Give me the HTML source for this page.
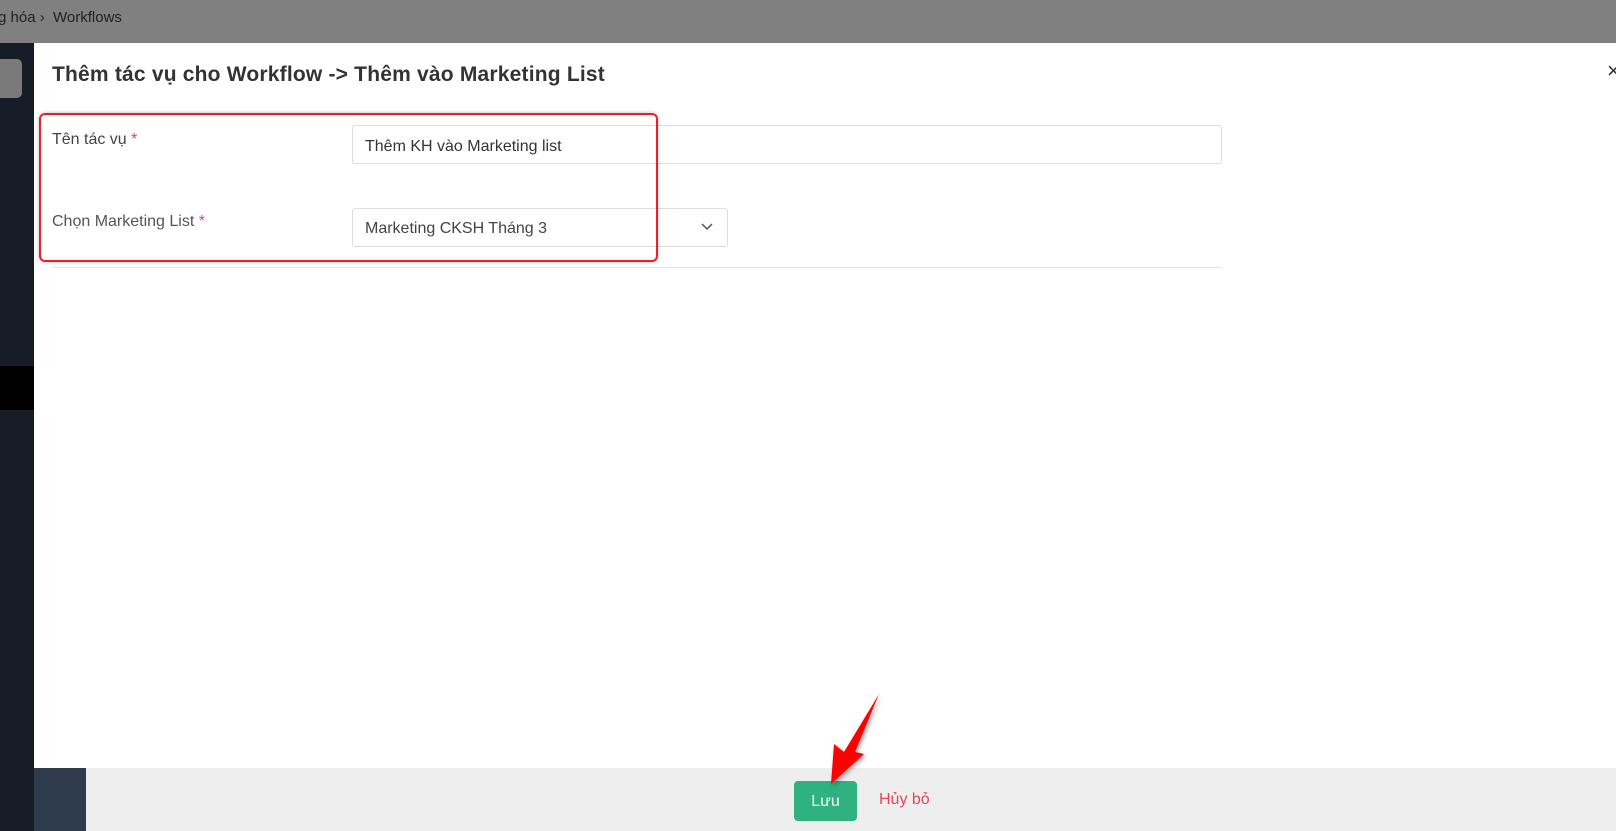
<!DOCTYPE html>
<html><head><meta charset="utf-8"><style>
*{margin:0;padding:0;box-sizing:border-box}
body{width:1616px;height:831px;overflow:hidden;position:relative;background:#808080;font-family:"Liberation Sans",Arial,sans-serif;color:#333}
.abs{position:absolute}
</style></head><body>
<div class="abs" style="left:0;top:0;width:1616px;height:43px;background:#808080"></div>
<div class="abs" style="left:-2px;top:9px;font-size:15px;color:#222">g hóa &#8250;&nbsp; Workflows</div>
<div class="abs" style="left:0;top:43px;width:34px;height:788px;background:#161d26"></div>
<div class="abs" style="left:0;top:59px;width:22px;height:39px;background:#7a7a7a;border-radius:0 5px 5px 0"></div>
<div class="abs" style="left:0;top:366px;width:34px;height:44px;background:#000"></div>
<div class="abs" style="left:34px;top:43px;width:1582px;height:788px;background:#fff"></div>
<div class="abs" style="left:52px;top:63px;font-size:21px;font-weight:bold;color:#333;letter-spacing:0.2px">Thêm tác vụ cho Workflow -&gt; Thêm vào Marketing List</div>
<div class="abs" style="left:1607px;top:58px;font-size:22px;color:#333">×</div>
<div class="abs" style="left:52px;top:131px;font-size:16px;color:#444">Tên tác vụ <span style="color:#e8435a">*</span></div>
<div class="abs" style="left:352px;top:125px;width:870px;height:39px;border:1px solid #ddd;border-radius:3px;font-size:16px;padding:12px 12px 0;color:#333">Thêm KH vào Marketing list</div>
<div class="abs" style="left:52px;top:213px;font-size:16px;color:#555">Chọn Marketing List <span style="color:#e8435a">*</span></div>
<div class="abs" style="left:352px;top:208px;width:376px;height:39px;border:1px solid #ddd;border-radius:3px;font-size:16px;padding:11px 12px 0;color:#444">Marketing CKSH Tháng 3</div>
<svg class="abs" style="left:700px;top:222px" width="14" height="10"><path d="M2 2 L7 7 L12 2" stroke="#555" stroke-width="1.5" fill="none"/></svg>
<div class="abs" style="left:52px;top:267px;width:1170px;height:1px;background:#e5e5e5"></div>
<div class="abs" style="left:39px;top:113px;width:619px;height:149px;border:2px solid #e8202a;border-radius:6px;box-shadow:0 0 4px rgba(0,0,0,.25)"></div>
<div class="abs" style="left:34px;top:768px;width:1582px;height:63px;background:#eeeeee"></div>
<div class="abs" style="left:34px;top:768px;width:52px;height:63px;background:#2d3b4c"></div>
<div class="abs" style="left:794px;top:781px;width:63px;height:40px;background:#2fb182;border-radius:4px;color:#fff;font-size:16px;text-align:center;line-height:41px">Lưu</div>
<div class="abs" style="left:879px;top:791px;font-size:16px;color:#e8435a">Hủy bỏ</div>
<svg class="abs" style="left:820px;top:690px;filter:drop-shadow(2px 2px 2px rgba(0,0,0,.35))" width="70" height="100"><path d="M59 4 L35 62 L44 64 L11 94 L14 54 L24 62 Z" fill="#f00"/></svg>
</body></html>
